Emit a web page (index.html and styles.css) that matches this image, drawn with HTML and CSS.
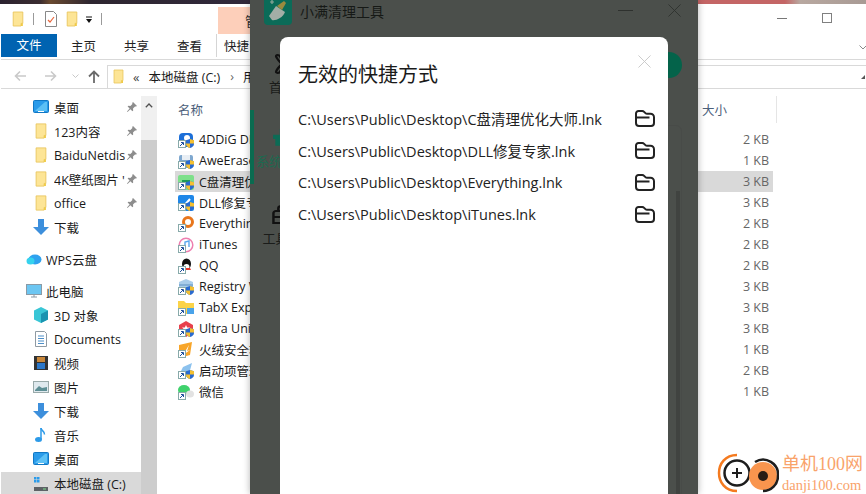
FILE: index.html
```html
<!DOCTYPE html>
<html lang="zh">
<head>
<meta charset="utf-8">
<title>小满清理工具</title>
<link rel="stylesheet" href="styles.css">
</head>
<body>
<svg class="defs" width="0" height="0">
  <symbol id="folder" viewBox="0 0 16 18"><path d="M2.5 1h11v13h-2v3h-9z" fill="#fde596" stroke="#e9c65c"/><path d="M11.5 14h2v3h-2z" fill="#f0c93f"/></symbol>
  <symbol id="pin" viewBox="0 0 12 12"><path d="M7 1l4 4-1 .6-1-.2-2 2 .2 2-.8.8-2-2L1.500 11 1 10.500l2.600-2.900-2-2 .8-.8 2 .2 2-2-.2-1z" fill="#8d8d8d"/></symbol>
  <symbol id="desk" viewBox="0 0 16 14"><rect x=".5" y=".5" width="15" height="12" rx="1" fill="#2a9bea" stroke="#1077c4"/><path d="M3 10l9-8h2v9H2z" fill="#5cc0f5"/><rect x="5" y="11" width="6" height="1" fill="#fff"/></symbol>
  <symbol id="down" viewBox="0 0 16 16"><path d="M5 0h6v8h5l-8 8-8-8h5z" fill="#3d8fdc"/></symbol>
  <symbol id="shortcut" viewBox="0 0 8 8"><rect x=".5" y=".5" width="7" height="7" fill="#fff" stroke="#8aa"/><path d="M2 6l3-3M3 2.500h2.500V5" fill="none" stroke="#1c4f9c"/></symbol>
  <symbol id="shield" viewBox="0 0 8 9"><path d="M4 0l4 1.200V5c0 2-2 3.500-4 4C2 8.500 0 7 0 5V1.200z" fill="#2a6bd0"/><path d="M4 0l4 1.200V4.500H4zM0 4.500h4V9C2 8.500 0 7 0 5z" fill="#f5c030"/></symbol>
  <symbol id="open" viewBox="0 0 20 17"><path d="M1 4V3.500A2.500 2.500 0 0 1 3.500 1h3.700c1 0 1.500.4 2.200 1.100l1 1c.5.500 1 .7 1.700.7h3.400A3.500 3.500 0 0 1 19 7.300v5.700a3 3 0 0 1-3 3H4a3 3 0 0 1-3-3zM1.500 7.500h13" fill="none" stroke="#222" stroke-width="2" stroke-linejoin="round"/></symbol>
</svg>

<div class="wallpaper"></div>

<main class="explorer">
  <header class="quickbar">
    <svg class="qa"><use href="#folder"/></svg>
    <span class="vr"></span>
    <svg class="qa-note" viewBox="0 0 12 16"><path d="M.5.500h8l3 3v12H.500z" fill="#fff" stroke="#888"/><path d="M3 9l2 2 4-5" fill="none" stroke="#e8653a" stroke-width="1.200"/></svg>
    <svg class="qa"><use href="#folder"/></svg>
    <svg class="qa-drop" viewBox="0 0 8 8"><path d="M1 1h6" stroke="#111"/><path d="M1 3h6L4 7z" fill="#111"/></svg>
    <span class="vr"></span>
    <span class="context-tab">管</span>
    <span class="win-btns">
      <span class="win-min"></span>
      <span class="win-max"></span>
    </span>
  </header>

  <nav class="ribbon">
    <span class="tab-file">文件</span>
    <span class="tab">主页</span>
    <span class="tab">共享</span>
    <span class="tab">查看</span>
    <span class="tab tab-ctx">快捷</span>
    <svg class="ribbon-chev" viewBox="0 0 8 5"><path d="M.5.500L4 4 7.500.500" fill="none" stroke="#888"/></svg>
  </nav>

  <div class="addressbar">
    <svg class="nav-ic" viewBox="0 0 13 12"><path d="M12 6H2M6 1.500L1.500 6 6 10.500" fill="none" stroke="#c9c9c9" stroke-width="1.600"/></svg>
    <svg class="nav-ic" viewBox="0 0 13 12"><path d="M1 6h10M7 1.500L11.500 6 7 10.500" fill="none" stroke="#c9c9c9" stroke-width="1.600"/></svg>
    <svg class="nav-drop" viewBox="0 0 7 4"><path d="M.5.500L3.500 3.500 6.500.500" fill="none" stroke="#c9c9c9"/></svg>
    <svg class="nav-up" viewBox="0 0 12 13"><path d="M6 13V2M1 6.500L6 1.500 11 6.500" fill="none" stroke="#6b6b6b" stroke-width="1.800"/></svg>
    <div class="pathbox">
      <svg class="path-ic"><use href="#folder"/></svg>
      <span class="crumb-more">«</span>
      <span class="crumb">本地磁盘 (C:)</span>
      <span class="crumb-sep">›</span>
      <span class="crumb">用户</span>
      <svg class="path-end" viewBox="0 0 5 4"><path d="M0 4l4-4v4z" fill="#555"/></svg>
    </div>
  </div>

  <div class="panes">
    <aside class="tree">
      <div class="row"><svg class="ic"><use href="#desk"/></svg><span class="lbl">桌面</span><svg class="pin"><use href="#pin"/></svg></div>
      <div class="row"><svg class="ic"><use href="#folder"/></svg><span class="lbl">123内容</span><svg class="pin"><use href="#pin"/></svg></div>
      <div class="row"><svg class="ic"><use href="#folder"/></svg><span class="lbl">BaiduNetdis</span><svg class="pin"><use href="#pin"/></svg></div>
      <div class="row"><svg class="ic"><use href="#folder"/></svg><span class="lbl">4K壁纸图片 '</span><svg class="pin"><use href="#pin"/></svg></div>
      <div class="row"><svg class="ic"><use href="#folder"/></svg><span class="lbl">office</span><svg class="pin"><use href="#pin"/></svg></div>
      <div class="row"><svg class="ic"><use href="#down"/></svg><span class="lbl">下载</span></div>
      <div class="row row-top group"><svg class="ic" viewBox="0 0 16 12"><ellipse cx="9" cy="6.500" rx="6.500" ry="5" fill="#2fa2ef"/><ellipse cx="4.500" cy="8" rx="4" ry="3.500" fill="#35d2ee"/></svg><span class="lbl">WPS云盘</span></div>
      <div class="row row-top group"><svg class="ic" viewBox="0 0 16 14"><rect x=".5" y=".5" width="15" height="10" fill="#6cc6f2" stroke="#8a9aa6"/><path d="M5 13h6M8 10.500V13" stroke="#8a9aa6"/></svg><span class="lbl">此电脑</span></div>
      <div class="row"><svg class="ic" viewBox="0 0 16 16"><path d="M8 0l7 3.500v9L8 16l-7-3.500v-9z" fill="#39c6d6"/><path d="M8 7l7-3.500v9L8 16z" fill="#1a93b0"/></svg><span class="lbl">3D 对象</span></div>
      <div class="row"><svg class="ic" viewBox="0 0 16 16"><path d="M2.500.500h9l2 2v13h-11z" fill="#fff" stroke="#8f9aa3"/><path d="M5 5h6M5 7.500h6M5 10h6M5 12.500h6" stroke="#4d8fc9"/></svg><span class="lbl">Documents</span></div>
      <div class="row"><svg class="ic" viewBox="0 0 16 16"><rect x="1" y="1" width="14" height="14" fill="#333"/><rect x="4" y="2" width="8" height="5" fill="#c9873a"/><rect x="4" y="8" width="8" height="6" fill="#2c77c9"/></svg><span class="lbl">视频</span></div>
      <div class="row"><svg class="ic" viewBox="0 0 16 12"><rect x=".5" y=".5" width="15" height="11" fill="#dfe9ee" stroke="#9aa"/><path d="M2 9l4-4 3 2 5-1v4H2z" fill="#5e8f95"/></svg><span class="lbl">图片</span></div>
      <div class="row"><svg class="ic"><use href="#down"/></svg><span class="lbl">下载</span></div>
      <div class="row"><svg class="ic" viewBox="0 0 16 16"><path d="M8 1v11" stroke="#2c9ae8" stroke-width="1.500"/><ellipse cx="5.500" cy="12.500" rx="3.500" ry="2.500" fill="#2c9ae8"/><path d="M8 1c0 3 4 3 3.500 6.500" fill="none" stroke="#2c9ae8" stroke-width="1.500"/></svg><span class="lbl">音乐</span></div>
      <div class="row"><svg class="ic"><use href="#desk"/></svg><span class="lbl">桌面</span></div>
      <div class="row row-sel"><svg class="ic" viewBox="0 0 16 16"><path d="M1 1h2.500v2.500H1zM4 1h2.500v2.500H4zM1 4h2.500v2.500H1zM4 4h2.500v2.500H4z" fill="#2a9bea"/><rect x="1" y="11" width="14" height="4" fill="#5d6266"/><rect x="10" y="12.500" width="3" height="1" fill="#7fe08a"/></svg><span class="lbl">本地磁盘 (C:)</span></div>
    </aside>
    <div class="scrollbar">
      <svg class="scroll-up" viewBox="0 0 8 5"><path d="M.8 4.200L4 1l3.200 3.200" fill="none" stroke="#505050" stroke-width="1.300"/></svg>
      <span class="scroll-thumb"></span>
    </div>

    <section class="files">
      <div class="files-head"><span>名称</span><span class="head-size">大小</span><span class="head-sep"></span></div>
      <div class="file"><span class="fname"><span class="fic"><svg class="fbase" viewBox="0 0 16 16"><rect x="1" y="1" width="14" height="14" rx="4" fill="#1d6fd8"/><circle cx="9" cy="6" r="3" fill="#fff"/></svg><svg class="fs"><use href="#shortcut"/></svg><svg class="fsh"><use href="#shield"/></svg></span>4DDiG DLL Fixer</span><span>2 KB</span></div>
      <div class="file"><span class="fname"><span class="fic"><svg class="fbase" viewBox="0 0 16 16"><rect x="1" y="2" width="14" height="13" rx="2" fill="#7fa8cf"/><rect x="4" y="2" width="8" height="5" fill="#e8eef4"/></svg><svg class="fs"><use href="#shortcut"/></svg><svg class="fsh"><use href="#shield"/></svg></span>AweEraser</span><span>1 KB</span></div>
      <div class="file file-sel"><span class="fname"><span class="fic"><svg class="fbase" viewBox="0 0 16 16"><rect x="0" y="1" width="16" height="15" rx="2" fill="#7de08a"/><path d="M8 2v5M4 6h8v6H4z" fill="#1d9a58"/></svg><svg class="fs"><use href="#shortcut"/></svg><svg class="fsh"><use href="#shield"/></svg></span>C盘清理优化大师</span><span>3 KB</span></div>
      <div class="file"><span class="fname"><span class="fic"><svg class="fbase" viewBox="0 0 16 16"><rect x="0" y="0" width="16" height="16" rx="2" fill="#1f87e8"/><path d="M5 12l7-8" stroke="#fff" stroke-width="2"/></svg><svg class="fs"><use href="#shortcut"/></svg><svg class="fsh"><use href="#shield"/></svg></span>DLL修复专家</span><span>3 KB</span></div>
      <div class="file"><span class="fname"><span class="fic"><svg class="fbase" viewBox="0 0 16 16"><circle cx="10" cy="6" r="4.500" fill="#fff" stroke="#e8761c" stroke-width="3"/></svg><svg class="fs"><use href="#shortcut"/></svg></span>Everything</span><span>2 KB</span></div>
      <div class="file"><span class="fname"><span class="fic"><svg class="fbase" viewBox="0 0 16 16"><circle cx="8" cy="8" r="6.800" fill="#fff" stroke="#ee7fb0" stroke-width="1.500"/><path d="M7 11V5l4-1v6" fill="none" stroke="#5aa8ee" stroke-width="1.400"/></svg><svg class="fs"><use href="#shortcut"/></svg></span>iTunes</span><span>2 KB</span></div>
      <div class="file"><span class="fname"><span class="fic"><svg class="fbase" viewBox="0 0 16 16"><ellipse cx="8.500" cy="6" rx="4.500" ry="5.500" fill="#111"/><ellipse cx="8.500" cy="9" rx="3" ry="3" fill="#fff"/><path d="M5 10h7l1 2H4z" fill="#e8392a"/></svg><svg class="fs"><use href="#shortcut"/></svg></span>QQ</span><span>2 KB</span></div>
      <div class="file"><span class="fname"><span class="fic"><svg class="fbase" viewBox="0 0 16 16"><path d="M8 0l7 3v7l-7 4-7-4V3z" fill="#a9cdea"/><path d="M1 6h14" stroke="#5b8fc0"/></svg><svg class="fs"><use href="#shortcut"/></svg><svg class="fsh"><use href="#shield"/></svg></span>Registry Workshop</span><span>3 KB</span></div>
      <div class="file"><span class="fname"><span class="fic"><svg class="fbase" viewBox="0 0 16 16"><path d="M0 1h6l2 2h8v11H0z" fill="#fbd348"/><rect x="9" y="8" width="7" height="6" fill="#4aa3ea"/></svg><svg class="fs"><use href="#shortcut"/></svg></span>TabX Explorer</span><span>3 KB</span></div>
      <div class="file"><span class="fname"><span class="fic"><svg class="fbase" viewBox="0 0 16 16"><path d="M8 0l7 4v8l-7 4-7-4V4z" fill="#e8404c"/><path d="M8 4l1.200 2.500H12L9.800 8.500 10.500 11 8 9.500 5.500 11l.7-2.500L4 6.500h2.800z" fill="#fff"/></svg><svg class="fs"><use href="#shortcut"/></svg><svg class="fsh"><use href="#shield"/></svg></span>Ultra Uninstaller</span><span>3 KB</span></div>
      <div class="file"><span class="fname"><span class="fic"><svg class="fbase" viewBox="0 0 16 16"><path d="M1 3l13-3-2 13-11 3z" fill="#f8a62a"/><path d="M5 13L11 3 9 9l3-1z" fill="#fff"/></svg><svg class="fs"><use href="#shortcut"/></svg></span>火绒安全软件</span><span>1 KB</span></div>
      <div class="file"><span class="fname"><span class="fic"><svg class="fbase" viewBox="0 0 16 16"><path d="M14 0L5 4l-3 6 4 4 5-3z" fill="#8cc2ee"/></svg><svg class="fs"><use href="#shortcut"/></svg><svg class="fsh"><use href="#shield"/></svg></span>启动项管理</span><span>2 KB</span></div>
      <div class="file"><span class="fname"><span class="fic"><svg class="fbase" viewBox="0 0 16 16"><ellipse cx="6" cy="6" rx="6" ry="5" fill="#3fd26c"/><ellipse cx="12" cy="10" rx="4" ry="3.500" fill="#e2e2e2"/></svg><svg class="fs"><use href="#shortcut"/></svg></span>微信</span><span>1 KB</span></div>
    </section>
  </div>
</main>

<section class="app">
  <header class="app-title">
    <svg class="app-logo" viewBox="0 0 28 28"><rect width="28" height="28" rx="4" fill="#0b6b58"/><path d="M5 19l7-10 9 6c-2 6-10 9-13 8z" fill="#a3aea6"/><path d="M13 9l7-5 2 2-4 7z" fill="#9a8a3e"/><path d="M6 5h4M8 3v4" stroke="#8fa89a" stroke-width="1.200"/></svg>
    <span class="app-name">小满清理工具</span>
    <span class="app-min"></span>
    <svg class="app-close" viewBox="0 0 14 14"><path d="M.5.500l13 13M13.500.500l-13 13" stroke="#303330" stroke-width="1"/></svg>
  </header>
  <div class="app-body">
    <nav class="app-nav">
      <div class="nav-item nav-home">
        <svg class="nav-glyph" viewBox="0 0 18 20" preserveAspectRatio="none"><path d="M9 10C4 4 3 1 5.500 1S9 6 9 10c0-4 1-9 3.500-9S14 4 9 10c-5 6-6 9-3.500 9S9 14 9 10c0 4 1 9 3.500 9S14 16 9 10z" fill="none" stroke="#111" stroke-width="2"/></svg>
        <span>首页</span>
      </div>
      <div class="nav-item nav-active">
        <svg class="nav-glyph" viewBox="0 0 18 18"><path d="M7 1h4v5h6v4h-2v6H3v-6H1V6h6z" fill="#0c6b55"/></svg>
        <span>系统清理</span>
      </div>
      <div class="nav-item">
        <svg class="nav-glyph" viewBox="0 0 18 20" preserveAspectRatio="none"><path d="M2 18V8c0-1 1-2 2-2h10c1 0 2 1 2 2v10zM6 6V3c0-1 1-2 3-2s3 1 3 2v3M2 12h14" fill="none" stroke="#111" stroke-width="2"/></svg>
        <span>工具箱</span>
      </div>
    </nav>
    <div class="app-main">
      <span class="app-go"></span>
      <div class="app-panel"><span class="app-scroll"></span></div>
    </div>
  </div>
</section>

<section class="modal">
  <svg class="modal-close" viewBox="0 0 14 14"><path d="M.5.500l13 13M13.500.500l-13 13" stroke="#c8c8c8" stroke-width="1"/></svg>
  <h1 class="modal-title">无效的快捷方式</h1>
  <ul class="modal-list">
    <li class="modal-row"><span>C:\Users\Public\Desktop\C盘清理优化大师.lnk</span><svg class="open-ic"><use href="#open"/></svg></li>
    <li class="modal-row"><span>C:\Users\Public\Desktop\DLL修复专家.lnk</span><svg class="open-ic"><use href="#open"/></svg></li>
    <li class="modal-row"><span>C:\Users\Public\Desktop\Everything.lnk</span><svg class="open-ic"><use href="#open"/></svg></li>
    <li class="modal-row"><span>C:\Users\Public\Desktop\iTunes.lnk</span><svg class="open-ic"><use href="#open"/></svg></li>
  </ul>
</section>

<aside class="watermark">
  <svg class="wm-logo" viewBox="0 0 62 42"><path d="M20 3C8 3 2 12 2 21s6 18 18 18" fill="none" stroke="#f47a1f" stroke-width="2.500"/><circle cx="20" cy="21" r="12.500" fill="#fff" stroke="#1d1d1d" stroke-width="2.500"/><path d="M20 16v10M15 21h10" stroke="#1d1d1d" stroke-width="2"/><circle cx="46" cy="24" r="14" fill="#f9954e"/><path d="M38 10a15 15 0 0 1 23 14 15 15 0 0 1-15 15" fill="none" stroke="#1d1d1d" stroke-width="2.500"/><circle cx="46" cy="24" r="5" fill="#2a1d14"/></svg>
  <div class="wm-text"><span class="wm-cn">单机100网</span><span class="wm-en">danji100.com</span></div>
</aside>
</body>
</html>
```
FILE: styles.css
```css
* { box-sizing: border-box; }
html, body { margin: 0; padding: 0; width: 866px; height: 494px; overflow: hidden; background: #fff; }
body { position: relative; font-family: "Open Sans", "Noto Sans CJK SC", sans-serif; color: #1a1a1a; }
.defs { position: absolute; }

.wallpaper {
  position: absolute; inset: 0 0 auto 0; height: 4px;
  background: linear-gradient(90deg, #2b2230 0, #3a2c30 40px, #6a4a30 50px, #2e2630 90px, #30283a 240px, #c46565 705px, #c46565 785px, #b8a8a0 800px, #a89a94 866px);
}

/* Explorer window */
.explorer { position: absolute; left: 1px; top: 4px; width: 865px; height: 490px; background: #fff; display: flex; flex-direction: column; overflow: hidden; }
.quickbar { height: 30px; display: flex; align-items: center; padding-left: 10px; flex: none; position: relative; }
.qa { width: 14px; height: 18px; }
.vr { width: 1px; height: 12px; background: #9a9a9a; margin: 0 11px 0 8px; }
.qa-note { width: 12px; height: 16px; margin-right: 8px; }
.qa-drop { width: 8px; height: 8px; margin: 2px 0 0 6px; }
.quickbar .vr:last-of-type { margin-left: 8px; }
.context-tab { position: absolute; left: 217px; top: 3px; width: 40px; height: 27px; background: #fdcfba; padding: 4px 0 0 27px; font-size: 13px; line-height: 20px; color: #333; overflow: hidden; }
.win-btns { position: absolute; left: 776px; top: 9px; display: flex; align-items: center; gap: 35px; }
.win-min { width: 10px; height: 1px; background: #777; }
.win-max { width: 10px; height: 10px; border: 1px solid #808080; }

.ribbon { height: 26px; display: flex; align-items: flex-start; border-bottom: 1px solid #d9d9d9; flex: none; position: relative; font-size: 12.500px; }
.tab-file { width: 56px; height: 23px; background: #0063b1; color: #fff; line-height: 23px; text-align: center; margin-right: 0; }
.tab { width: 53px; height: 23px; line-height: 25px; text-align: center; color: #222; }
.tab-ctx { border-left: 1px solid #d5d5d5; width: 50px; padding-right: 10px; }
.ribbon-chev { position: absolute; left: 858px; top: 11px; width: 8px; height: 5px; }

.addressbar { height: 29px; display: flex; align-items: center; padding: 5px 0 1px 13px; flex: none; border-bottom: 1px solid #d9d9d9; }
.nav-ic { width: 13px; height: 12px; margin-right: 17px; }
.nav-drop { width: 7px; height: 4px; margin: 0 9px 0 -2px; }
.nav-up { width: 12px; height: 13px; margin-right: 7px; }
.pathbox { flex: 1; height: 23px; border: 1px solid #d9d9d9; border-right: 0; border-bottom: 0; display: flex; align-items: center; padding-left: 4px; font-size: 12.500px; white-space: nowrap; }
.path-ic { width: 13px; height: 17px; margin-right: 8px; }
.crumb-more { font-size: 13px; margin-right: 9px; color: #444; }
.crumb-sep { margin: 0 9px 0 10px; color: #666; }
.path-end { width: 5px; height: 4px; margin-left: auto; }

.panes { flex: 1; display: flex; min-height: 0; padding-top: 7px; }
.tree { width: 140px; flex: none; overflow: hidden; font-size: 12.500px; margin-top: -1px; }
.row { height: 24px; display: flex; align-items: center; padding: 0 3px 0 32px; white-space: nowrap; }
.row-top { padding-left: 25px; }
.group { margin-top: 8px; }
.row-sel { background: #d9d9d9; height: 23px; margin-top: 1px; }
.ic { width: 16px; height: 16px; flex: none; margin-right: 5px; }
.row-top .ic { margin-right: 4px; }
.lbl { flex: 0 1 auto; overflow: hidden; min-width: 0; }
.pin { width: 12px; height: 12px; flex: none; margin-left: auto; }
.scrollbar { width: 16px; flex: none; background: #f0f0f0; display: flex; flex-direction: column; }
.scroll-up { width: 8px; height: 5px; margin: 7px 0 0 4px; flex: none; }
.scroll-thumb { flex: 1; margin-top: 32px; background: #cdcdcd; }

.files { flex: none; width: 620px; margin-left: 18px; font-size: 12.500px; }
.files-head { height: 27px; margin-bottom: 6px; position: relative; display: flex; justify-content: space-between; align-items: center; padding: 1px 53px 1px 3px; color: #4c607a; width: 602px; }
.head-size { position: relative; left: 3px; }
.head-sep { position: absolute; right: 0; top: 0; width: 1px; height: 27px; background: #e5e5e5; }
.file { height: 21px; width: 598px; display: flex; justify-content: space-between; align-items: center; padding: 0 4px 0 3px; color: #666; white-space: nowrap; }
.file-sel { background: #d9d9d9; }
.fname { display: flex; align-items: center; color: #1a1a1a; }
.fic { position: relative; width: 16px; height: 16px; margin-right: 5px; flex: none; }
.fbase { width: 16px; height: 16px; display: block; }
.fs { position: absolute; left: 0; bottom: 0; width: 8px; height: 8px; }
.fsh { position: absolute; right: 0; bottom: 0; width: 8px; height: 9px; }

/* Dimmed app window */
.app { position: absolute; left: 250px; top: 0; width: 448px; height: 494px; background: #4b4f4b; box-shadow: 0 0 7px rgba(0,0,0,.3); display: flex; flex-direction: column; }
.app-title { height: 38px; flex: none; display: flex; align-items: flex-start; padding-left: 14px; position: relative; }
.app-logo { width: 28px; height: 28px; margin: -3px 8px 0 0; }
.app-name { font-size: 14px; line-height: 22px; margin-top: 1px; color: #161916; }
.app-min { position: absolute; left: 368px; top: 10px; width: 15px; height: 1px; background: #2e312e; }
.app-close { position: absolute; left: 418px; top: 4px; width: 13px; height: 13px; }
.app-body { flex: 1; display: flex; min-height: 0; }
.app-nav { width: 64px; flex: none; font-size: 13px; color: #1a1c1a; }
.nav-item { display: flex; flex-direction: column; align-items: center; white-space: nowrap; height: 60px; }
.nav-item span { line-height: 18px; }
.nav-glyph { width: 22px; height: 20px; margin-bottom: 4px; flex: none; }
.nav-home { height: 72px; padding-top: 16px; }
.nav-active { height: 74px; padding-top: 18px; border-left: 4px solid #0a6b50; padding-right: 4px; color: #1b6a50; }
.nav-active + .nav-item { padding-top: 21px; height: 70px; }
.app-main { flex: 1; position: relative; }
.app-go { position: absolute; right: 16px; top: 14px; width: 26px; height: 26px; border-radius: 50%; background: #04634a; }
.app-panel { position: absolute; left: 12px; right: 16px; top: 87px; bottom: -4px; border: 1px solid #484b48; border-radius: 6px; }
.app-scroll { position: absolute; right: 1px; top: 65px; bottom: 0; width: 4px; background: #404340; }

/* Modal */
.modal { position: absolute; left: 280px; top: 37px; width: 388px; height: 470px; background: #fff; border-radius: 8px; padding: 24px 13px 0 18px; }
.modal-close { position: absolute; left: 358px; top: 18px; width: 13px; height: 13px; }
.modal-title { margin: 0 0 13px; font-weight: 400; font-size: 20px; line-height: 28px; color: #1a1a1a; }
.modal-list { list-style: none; margin: 0; padding: 0; }
.modal-row { height: 32px; display: flex; align-items: center; justify-content: space-between; font-size: 14.500px; color: #222; white-space: nowrap; }
.open-ic { width: 20px; height: 17px; flex: none; }

/* Watermark */
.watermark { position: absolute; left: 717px; top: 452px; width: 149px; height: 42px; display: flex; gap: 3px; overflow: hidden; }
.wm-logo { width: 62px; height: 42px; flex: none; }
.wm-text { display: flex; flex-direction: column; font-family: "Liberation Serif", "Noto Sans CJK SC", serif; color: #f9a36b; white-space: nowrap; }
.wm-cn { font-size: 18px; line-height: 24px; }
.wm-en { font-size: 14.500px; line-height: 18px; }
```
